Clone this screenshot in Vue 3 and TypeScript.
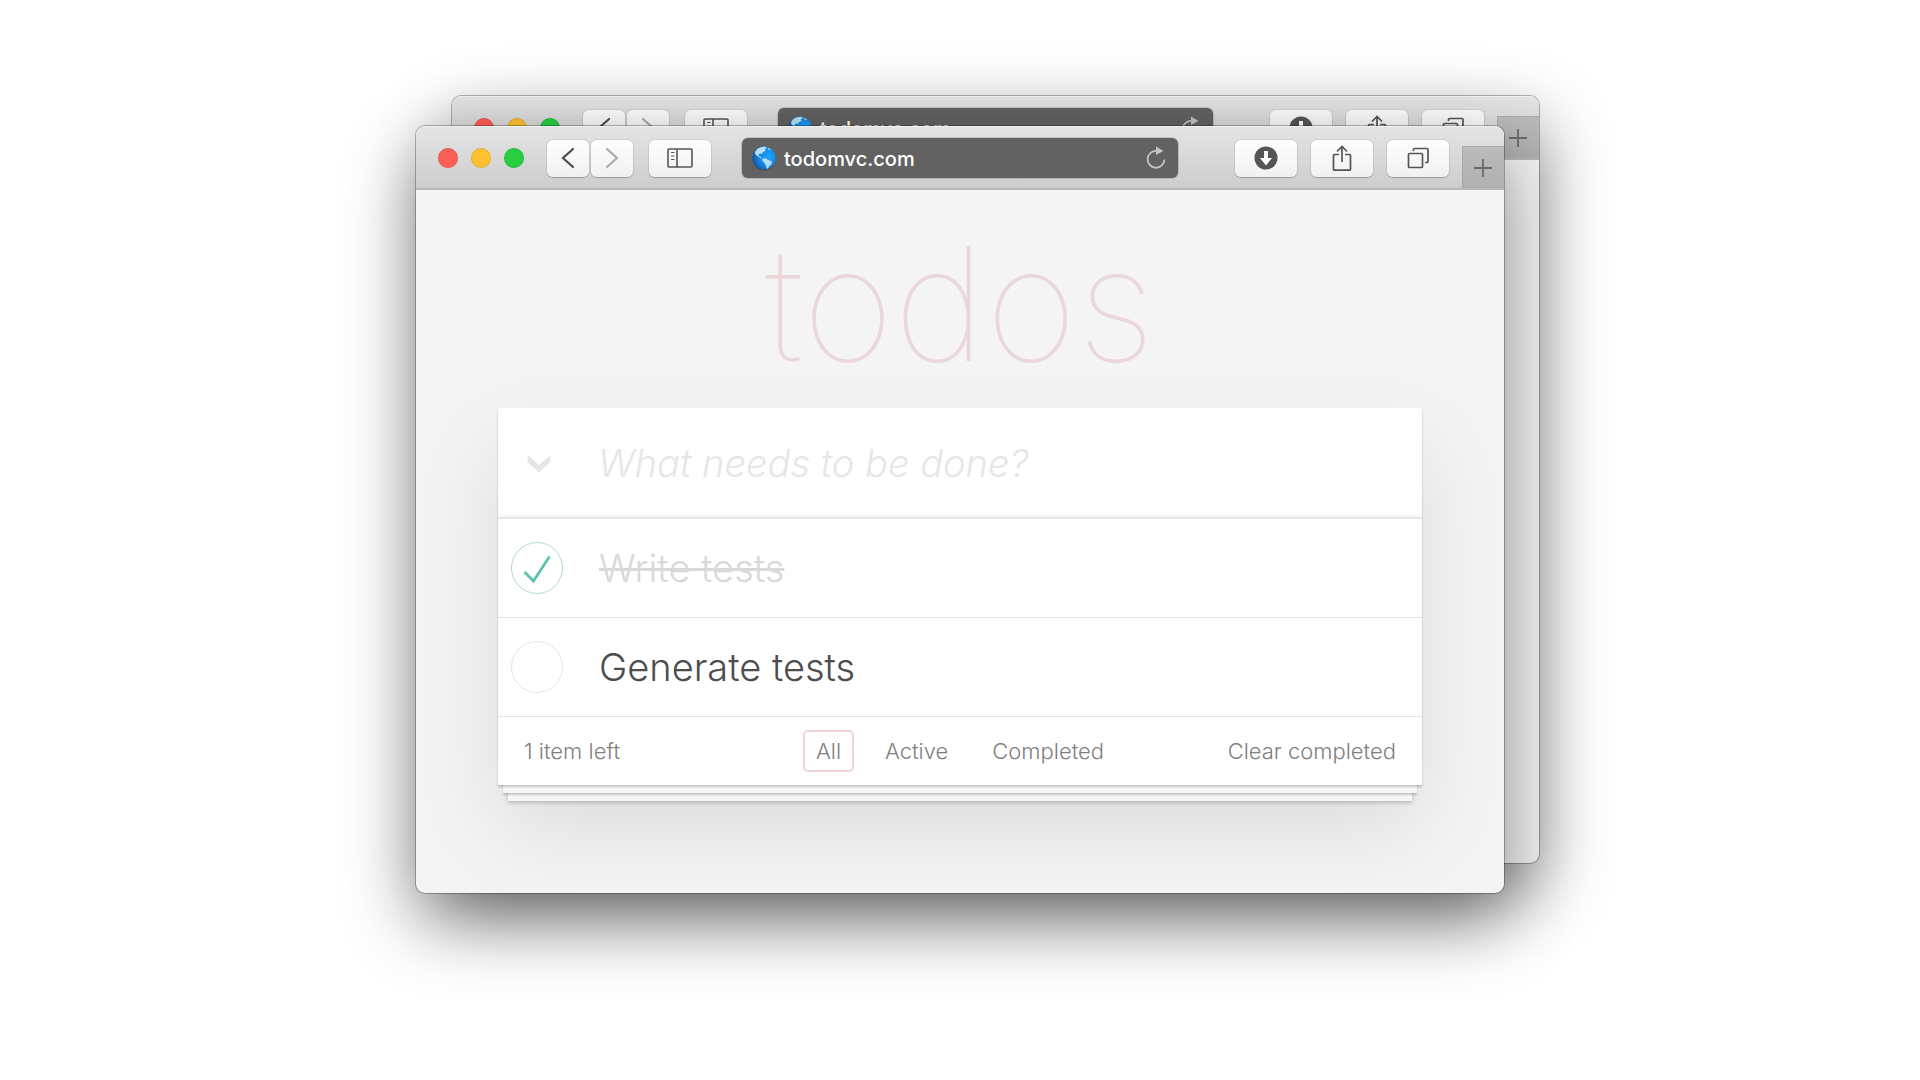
<script setup lang="ts">
import { computed, ref } from 'vue'

interface Todo {
  id: number
  title: string
  done: boolean
}

const windows = [
  { id: 'back', active: false },
  { id: 'front', active: true },
]
const filters = ['All', 'Active', 'Completed']

const address = ref('todomvc.com')
const draft = ref('')
const current = ref('All')
const todos = ref<Todo[]>([
  { id: 1, title: 'Write tests', done: true },
  { id: 2, title: 'Generate tests', done: false },
])

const remaining = computed(() => todos.value.filter((t) => !t.done).length)
const shown = computed(() =>
  todos.value.filter((t) => current.value === 'All' || t.done === (current.value === 'Completed')),
)
const allDone = computed({
  get: () => remaining.value === 0,
  set: (value: boolean) => todos.value.forEach((t) => (t.done = value)),
})

function addTodo() {
  const title = draft.value.trim()
  if (title) todos.value.push({ id: Date.now(), title, done: false })
  draft.value = ''
}

function clearCompleted() {
  todos.value = todos.value.filter((t) => !t.done)
}
</script>

<template>
  <div class="desktop">
    <div class="stack">
      <div
        v-for="win in windows"
        :key="win.id"
        class="window"
        :class="{ behind: !win.active }"
        :inert="!win.active"
      >
        <header class="toolbar">
          <div class="lights">
            <button class="light red" aria-label="Close"></button>
            <button class="light yellow" aria-label="Minimize"></button>
            <button class="light green" aria-label="Zoom"></button>
          </div>
          <div class="nav">
            <button class="tool narrow" aria-label="Back">
              <svg width="14" height="22" viewBox="0 0 14 22"><path d="M12 2 2 11l10 9" fill="none" stroke="#4d4d4d" stroke-width="2.2" stroke-linecap="round" /></svg>
            </button>
            <button class="tool narrow" aria-label="Forward">
              <svg width="14" height="22" viewBox="0 0 14 22"><path d="m2 2 10 9-10 9" fill="none" stroke="#ababab" stroke-width="2.2" stroke-linecap="round" /></svg>
            </button>
          </div>
          <button class="tool" aria-label="Sidebar">
            <svg width="26" height="20" viewBox="0 0 26 20" fill="none" stroke="#555">
              <rect x="1" y="1" width="24" height="18" rx="1" stroke-width="1.6" />
              <path d="M10 1v18" stroke-width="1.6" />
              <path d="M4 4.5h3.500M4 8h3.500M4 11.500h3.500" stroke-width="1.2" />
            </svg>
          </button>
          <div class="address">
            <svg class="globe" width="26" height="26" viewBox="0 0 26 26">
              <defs>
                <radialGradient :id="'sea-' + win.id" cx="0.72" cy="0.45" r="0.75">
                  <stop offset="0" stop-color="#18a4ff" />
                  <stop offset="0.6" stop-color="#1682de" />
                  <stop offset="1" stop-color="#0d539e" />
                </radialGradient>
              </defs>
              <circle cx="13" cy="14" r="11.500" fill="#000" opacity="0.25" />
              <circle cx="13" cy="13" r="11.500" :fill="`url(#sea-${win.id})`" />
              <path d="M6 4.200C8 2.500 11 1.700 14 1.700l2 1-2 1.500.5 1.800-2.500 1-1.500 2-2-.5-1 1.500.8 1.300 1.700.7.8 1.500-1.500-.4L6.500 11 4.500 9.500 4 7z" fill="#b9e0f7" />
              <path d="m11.500 13.500 3-.3 2.500 1.500 4 1.800-.8 3-2 1.500-1.200 2.500-1 .2-1.200-3.500-1.500-2.500-2-2z" fill="#b4dbf3" />
              <path d="m17 2.800 3 1.700-1 .8-2-.8z" fill="#8fcdf6" />
            </svg>
            <input v-model="address" class="url" type="text" aria-label="Address" />
            <button class="reload" aria-label="Reload">
              <svg width="20" height="24" viewBox="0 0 20 24"><path d="M11 5A8.400 8.400 0 1 0 18.400 13.400" fill="none" stroke="#c4c4c4" stroke-width="1.800" /><path d="M10 .5 17.500 5 10 9z" fill="#c4c4c4" /></svg>
            </button>
          </div>
          <div class="actions">
            <button class="tool" aria-label="Downloads">
              <svg width="24" height="24" viewBox="0 0 24 24"><circle cx="12" cy="12" r="11.500" fill="#555" /><path d="M10 5h4v7h4l-6 7.500L6 12h4z" fill="#fff" /></svg>
            </button>
            <button class="tool" aria-label="Share">
              <svg width="20" height="26" viewBox="0 0 20 26" fill="none" stroke="#555" stroke-width="1.700"><path d="M7 9.500H2.500a1 1 0 0 0-1 1v13.700a1 1 0 0 0 1 1h15a1 1 0 0 0 1-1V10.500a1 1 0 0 0-1-1H13M10 17V1.500M5 6.500l5-5 5 5" /></svg>
            </button>
            <button class="tool" aria-label="Show all tabs">
              <svg width="22" height="22" viewBox="0 0 22 22" fill="none" stroke="#555" stroke-width="1.700"><rect x="1.500" y="6.500" width="14" height="14" rx="1" /><path d="M6.500 4V2.500a1 1 0 0 1 1-1H20a1 1 0 0 1 1 1V14.500a1 1 0 0 1-1 1h-2" /></svg>
            </button>
          </div>
          <button class="new-tab" aria-label="New tab">
            <svg width="20" height="20" viewBox="0 0 20 20"><path d="M10 1v18M1 10h18" stroke="#6a6a6a" stroke-width="1.800" /></svg>
          </button>
        </header>

        <main v-if="win.active" class="page">
          <h1>todos</h1>
          <section class="card">
            <form class="entry" @submit.prevent="addTodo">
              <label class="toggle-all">
                <input v-model="allDone" type="checkbox" aria-label="Mark all as complete" />
                <svg width="28" height="20" viewBox="0 0 28 20"><path d="M3 3v6l11 10 11-10V3L14 12.500z" fill="#e6e6e6" stroke="#e6e6e6" /></svg>
              </label>
              <input v-model="draft" class="new-todo" type="text" placeholder="What needs to be done?" aria-label="New todo" />
            </form>
            <ul class="todos">
              <li v-for="todo in shown" :key="todo.id" :class="{ done: todo.done }">
                <label>
                  <span class="mark">
                    <input v-model="todo.done" type="checkbox" />
                    <svg v-if="todo.done" width="52" height="52" viewBox="0 0 52 52"><path d="m13.500 30 9 9L38.500 14.500" fill="none" stroke="#5dc2af" stroke-width="2.800" /></svg>
                  </span>
                  <span class="title">{{ todo.title }}</span>
                </label>
              </li>
            </ul>
            <footer class="summary">
              <span class="count">{{ remaining }} item left</span>
              <nav class="filters">
                <a
                  v-for="name in filters"
                  :key="name"
                  href="#"
                  :class="{ selected: name === current }"
                  @click.prevent="current = name"
                >{{ name }}</a>
              </nav>
              <button class="clear" @click="clearCompleted">Clear completed</button>
            </footer>
          </section>
        </main>
      </div>
    </div>
  </div>
</template>

<style>
body {
  background: #fff;
}
</style>

<style scoped>
.desktop {
  box-sizing: border-box;
  min-height: 100vh;
  overflow: hidden;
  padding: 126px 48px 96px;
  font-family: Inter, "Liberation Sans", sans-serif;
}

.stack {
  position: relative;
  max-width: 1088px;
  margin: 0 auto;
}

.window {
  position: relative;
  overflow: hidden;
  border-radius: 9px;
  background: #f4f4f4;
  box-shadow:
    0 0 0 1px rgba(0, 0, 0, 0.28),
    0 28px 72px rgba(0, 0, 0, 0.45);
}

.window.behind {
  position: absolute;
  inset: -30px -35px 30px 36px;
}

button {
  padding: 0;
  border: 0;
  background: none;
  font: inherit;
  color: inherit;
}

input {
  margin: 0;
}

svg {
  display: block;
}

.toolbar {
  box-sizing: border-box;
  display: flex;
  align-items: center;
  height: 64px;
  padding: 2px 0 0 22px;
  border-bottom: 2px solid #b8b8b8;
  background: linear-gradient(#e4e4e4, #cdcdcd);
  box-shadow: inset 0 1px #f2f2f2;
}

.lights {
  display: flex;
  gap: 13px;
  margin-right: 23px;
}

.light {
  width: 20px;
  height: 20px;
  border-radius: 50%;
  box-shadow: inset 0 0 0 1px rgba(0, 0, 0, 0.1);
}

.red {
  background: #ff5f57;
}

.yellow {
  background: #ffc130;
}

.green {
  background: #28cf42;
}

.nav {
  display: flex;
  gap: 2px;
  margin-right: 16px;
}

.tool {
  display: flex;
  flex: none;
  align-items: center;
  justify-content: center;
  width: 62px;
  height: 37px;
  border-radius: 6px;
  background: linear-gradient(#fdfdfd, #f1f1f1);
  box-shadow:
    0 0 0 1px rgba(0, 0, 0, 0.06),
    0 1px 1px rgba(0, 0, 0, 0.2);
}

.narrow {
  width: 42px;
}

.address {
  box-sizing: border-box;
  display: flex;
  flex: 1;
  align-items: center;
  min-width: 0;
  height: 40px;
  margin: 0 57px 0 31px;
  padding: 0 12px 0 9px;
  border-radius: 6px;
  background: #626262;
  box-shadow: 0 0 0 1px rgba(0, 0, 0, 0.14);
}

.url {
  flex: 1;
  min-width: 0;
  margin-left: 7px;
  padding: 2px 0 0;
  border: 0;
  outline: 0;
  background: none;
  color: #fff;
  font: 500 20px/28px Inter, "Liberation Sans", sans-serif;
}

.actions {
  display: flex;
  gap: 14px;
  margin-right: 13px;
}

.new-tab {
  box-sizing: border-box;
  display: flex;
  align-items: center;
  justify-content: center;
  align-self: flex-end;
  width: 42px;
  height: 42px;
  padding-top: 2px;
  background: linear-gradient(#bbb, #b0b0b0);
  box-shadow: inset 1px 1px rgba(0, 0, 0, 0.08);
}

.page {
  padding: 0 82px 108px;
}

h1 {
  margin: 0;
  padding-top: 10px;
  color: #ead7d9;
  font-size: 158px;
  font-weight: 100;
  line-height: 208px;
  text-align: center;
}

.card {
  background: #fff;
  box-shadow:
    0 2px 2px rgba(0, 0, 0, 0.2),
    0 13px 0 -5px #f6f6f6,
    0 15px 2px -5px rgba(0, 0, 0, 0.2),
    0 26px 0 -10px #f6f6f6,
    0 28px 4px -10px rgba(0, 0, 0, 0.2),
    0 42px 84px rgba(0, 0, 0, 0.1);
}

.entry {
  box-sizing: border-box;
  display: flex;
  align-items: center;
  height: 111px;
  border-bottom: 2px solid #e6e6e6;
  box-shadow: inset 0 -3px 2px rgba(0, 0, 0, 0.03);
}

.toggle-all {
  display: grid;
  place-items: center;
  width: 82px;
  height: 82px;
  margin-right: 18px;
}

.toggle-all > *,
.mark > * {
  grid-area: 1 / 1;
}

.toggle-all input {
  appearance: none;
}

.new-todo {
  flex: 1;
  min-width: 0;
  padding: 0;
  border: 0;
  outline: 0;
  background: none;
  color: #4d4d4d;
  font: 300 38px/56px Inter, "Liberation Sans", sans-serif;
}

.new-todo::placeholder {
  color: #e6e6e6;
  font-style: italic;
  opacity: 1;
}

.todos {
  margin: 0;
  padding: 0;
  list-style: none;
}

.todos li {
  border-bottom: 1px solid #e6e6e6;
}

.todos label {
  display: flex;
  align-items: center;
  height: 98px;
  padding-left: 13px;
}

.mark {
  display: grid;
  flex: none;
  width: 52px;
  height: 52px;
  margin-right: 36px;
}

.mark input {
  appearance: none;
  box-sizing: border-box;
  width: 52px;
  height: 52px;
  border: 1px solid #e6e6e6;
  border-radius: 50%;
}

.mark input:checked {
  border-color: #b5d8d1;
}

.title {
  color: #4d4d4d;
  font-size: 38px;
  font-weight: 300;
}

.done .title {
  color: #d9d9d9;
  text-decoration: line-through;
}

.summary {
  display: grid;
  grid-template-columns: 1fr auto 1fr;
  align-items: center;
  height: 68px;
  padding: 0 26px;
  color: #808080;
  font-size: 22px;
  font-weight: 300;
}

.filters {
  display: flex;
  gap: 18px;
}

.filters a {
  padding: 5px 11px;
  border: 2px solid transparent;
  border-radius: 5px;
  color: inherit;
  line-height: 28px;
  text-decoration: none;
}

.filters .selected {
  border-color: #efd5d5;
}

.clear {
  justify-self: end;
}
</style>
